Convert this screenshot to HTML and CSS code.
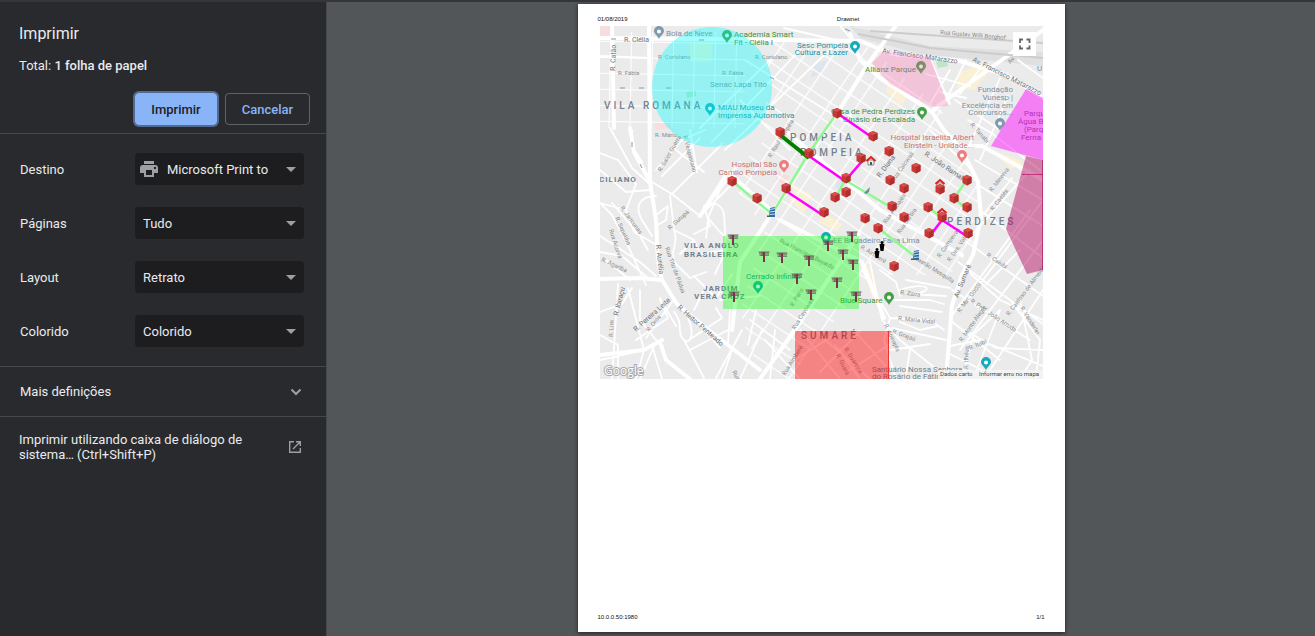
FILE: index.html
```html
<!DOCTYPE html>
<html lang="pt">
<head>
<meta charset="utf-8">
<title>Imprimir</title>
<link rel="stylesheet" href="styles.css">
</head>
<body>
<div class="dialog">
  <form class="sidebar">
    <header class="head">
      <h1 class="title">Imprimir</h1>
      <p class="total">Total: <b>1 folha de papel</b></p>
      <div class="actions">
        <button class="btn primary" type="button">Imprimir</button>
        <button class="btn" type="button">Cancelar</button>
      </div>
    </header>
    <section class="settings">
      <div class="row">
        <label for="dest">Destino</label>
        <div class="pick with-icon">
          <svg class="printer" viewBox="0 0 18 16" aria-hidden="true"><path fill="#9aa0a6" d="M4 0h10v3H4zM3 4h12a3 3 0 0 1 3 3v5h-4v4H4v-4H0V7a3 3 0 0 1 3-3z"/><path fill="#1d1d1f" d="M6 9h6v5H6zM14 6h2v2h-2z"/></svg>
          <select id="dest"><option>Microsoft Print to</option></select>
          <svg class="arrow" viewBox="0 0 10 5" aria-hidden="true"><path d="M0 0h10L5 5z"/></svg>
        </div>
      </div>
      <div class="row">
        <label for="pages">Páginas</label>
        <div class="pick"><select id="pages"><option>Tudo</option></select><svg class="arrow" viewBox="0 0 10 5" aria-hidden="true"><path d="M0 0h10L5 5z"/></svg></div>
      </div>
      <div class="row">
        <label for="layout">Layout</label>
        <div class="pick"><select id="layout"><option>Retrato</option></select><svg class="arrow" viewBox="0 0 10 5" aria-hidden="true"><path d="M0 0h10L5 5z"/></svg></div>
      </div>
      <div class="row">
        <label for="color">Colorido</label>
        <div class="pick"><select id="color"><option>Colorido</option></select><svg class="arrow" viewBox="0 0 10 5" aria-hidden="true"><path d="M0 0h10L5 5z"/></svg></div>
      </div>
    </section>
    <button class="more" type="button">Mais definições
      <svg class="glyph" viewBox="0 0 14 14" aria-hidden="true"><path d="M2.500 4.500 7 9l4.500-4.500" fill="none" stroke="#9aa0a6" stroke-width="2"/></svg>
    </button>
    <a class="system" href="#">
      <span>Imprimir utilizando caixa de diálogo de sistema… (Ctrl+Shift+P)</span>
      <svg class="glyph" viewBox="0 0 14 14" aria-hidden="true"><path d="M6 1.700H1.700v10.600h10.600V8M8 1.700h4.300V6M12 2 5 9" fill="none" stroke="#9aa0a6" stroke-width="1.400"/></svg>
    </a>
  </form>

  <main class="preview">
    <article class="sheet">
      <header class="sheet-line"><span>01/08/2019</span><span class="name">Drawnet</span></header>
      <svg class="map" viewBox="600 26 443 353" role="img" aria-label="Mapa">
        <defs>
          <pattern id="blocks" width="24" height="18" patternUnits="userSpaceOnUse" patternTransform="translate(780 133) rotate(34)"><path d="M0 0H24M0 0V18" stroke="#fff" stroke-width="2.600"/></pattern>
          <pattern id="grid" width="21" height="16" patternUnits="userSpaceOnUse" patternTransform="translate(610 41) rotate(1)"><path d="M0 0H21M0 0V16" stroke="#fff" stroke-width="2"/></pattern>
          <g id="cube"><path fill="#c93835" d="M0-5 4.500-3V3L0 5.500-4.500 3V-3z"/><path fill="#d6504c" d="M0-5 4.500-3 0-1-4.500-3z"/><path fill="#b02e2d" d="M0-1 4.500-3V3L0 5.500z"/></g>
          <g id="torii"><path stroke="#606d68" stroke-width="1.200" d="M-5.500-4H5.500M-4.500-.8H5"/><path stroke="#8a4a58" stroke-width="1" d="M-5-2.900H5"/><path stroke="#7a3549" stroke-width="2" d="M0-4V6"/><path stroke="#7a3549" stroke-width=".8" d="M-2-4V0"/></g>
          <g id="house"><path fill="#eee" stroke="#777" stroke-width=".8" d="M-3-1H3V4H-3z"/><path fill="none" stroke="#d22" stroke-width="2" d="M-4.500 0 0-4 4.500 0"/><path fill="#555" d="M-1 1H1V4H-1z"/></g>
          <g id="tower"><path fill="#2f6ba6" d="M-2-4 3-5V5H-3z"/><path stroke="#d5e8f7" stroke-width=".9" d="M-2-2.500 3-3.500M-2 0 3-.8M-2 2.500 3 2"/><path fill="#386b38" d="M-5 3.500H-2V5H-5z"/></g>
          <g id="person"><circle cy="-3.500" r="1.500"/><path d="M-2.500-2H2.500L1.500 5H-1.500z"/></g>
          <g id="pin"><path d="M0 6C-1 3-5 1-5-2A5 5 0 0 1 5-2C5 1 1 3 0 6z"/><circle cy="-1.500" r="2" fill="#fff"/></g>
        </defs>
        <path fill="#ebebeb" d="M600 26H1043V379H600z"/>
        <g fill="#e0e0e0"><path d="M850 26 930 46 1043 52V66L920 54 860 38z"/></g>
        <g fill="#faf0d6"><path d="M960 72 986 62 992 68 974 90 956 88zM888 85 906 98 902 106 886 92zM794 185 812 195 804 214 790 200zM826 214 842 224 838 232 818 222zM993 152 1020 160 1026 168 1010 168zM861 262 870 268 880 300 872 298zM690 42H712V62H690z"/></g>
        <path fill="#bfe5c4" d="M686 92 696 90V96L687 98zM936 62 946 60 948 66 938 68z"/><path fill="#dde5ec" d="M815 64 826 60 822 74 811 77zM838 180 846 176 842 190 834 188z"/>
        <path fill="#f7dddd" d="M600 26H611V36H600zM654 123 674 120 672 128 656 130zM778 172 790 176 784 184 776 180z"/>
        <path fill="url(#grid)" d="M600 32H745V128H600z"/>
        <path fill="url(#blocks)" d="M768 42H862L940 108 962 155 980 190V236L950 275H870L790 379H760L740 310 765 230 728 178 765 140z"/>
        <g fill="none" stroke="#fff" stroke-width="1.800" stroke-linecap="round" stroke-linejoin="round">
          <path d="M700 128 770 60M712 142 800 50M725 150 840 40M740 100 790 150M745 60 850 125M610 128 632 168 652 186M600 153 618 160 636 184 626 210 600 203M600 170 626 192 650 190M632 130 632 146 642 162M656 170 682 140 705 130M652 182 672 194 690 176 722 144M672 194 700 216 740 162M662 176 700 138M676 150 704 172M690 130 697 172M700 216 730 186M738 164 720 190 708 218 720 232 730 240"/>
          <path d="M600 203 612 215 630 250 646 285M612 203 640 236 648 250M626 210 634 232 655 244M656 196C640 196 634 206 642 220L652 236M656 215 668 206 666 220 656 226M670 195 674 230C680 244 668 250 676 264L690 278 706 272M674 230 694 240 680 254M694 234 710 226 704 206C712 200 722 204 724 214L726 250 700 254 694 240M708 220 706 238M600 236 640 262 656 276M600 252 622 256 648 278M606 260 630 280M618 284 612 379M600 335 618 345V379M600 312 622 304 632 288M628 288 644 350 636 379M640 290 640 320 660 345M646 338 672 302M660 298 676 326M636 340 668 318 660 300M654 346 640 379M652 345 662 379M674 312C684 322 676 334 684 340S694 330 688 318M684 340 704 378M692 338 722 318 716 308M690 350 728 330M694 276 716 298 732 274M704 290 694 310M728 246 715 274M720 300 760 296M730 310 728 345M756 310 748 345M750 320 790 350M742 330 716 378M762 330 740 379M765 340 800 379M775 330 770 379M720 348 704 330M732 350 722 379M600 360 644 350"/>
          <path d="M600 56 650 58M840 26 852 40M784 28 836 40M950 70 930 104M966 60 944 104M984 64 960 94M930 58 950 104M926 74 970 86M940 92 966 98M1000 78 968 148M1018 60 1043 78M1008 96 980 160M968 120 990 132 1040 170M955 100 1000 130M930 130 970 168M975 160 1043 200M980 186 1043 226M980 210 1043 258M1030 170 980 226M1043 200 968 300M1012 178 984 214M1043 240 960 350M1030 210 950 318M964 240 1043 296M958 262 1043 324M952 290 1030 340M950 320 1000 360M964 268 1000 300 1043 320M1043 290 990 370M1000 310 976 372M1020 250 986 284M965 330 996 348 1043 350M950 346 980 340 1043 366M1010 300 1040 340 1036 379M962 378 974 334 1000 310M1020 300 1032 360 1020 379M950 354 1000 379"/>
          <path d="M870 262 882 320 900 340M862 270 890 318 930 320 944 330M890 318 884 340 896 379M900 290C930 280 936 292 912 294L946 296M900 306 942 312M888 300 930 300 944 304M892 328 946 340M900 340 940 372M890 350 930 344M900 322 920 330 938 326M910 350 905 379M800 330 840 379M814 330 870 379M795 360 840 331M820 372 860 331M850 370 889 345M855 331 889 370M835 345 860 379M880 270 896 282 900 296M906 280 950 288"/>
        </g>
        <g fill="none" stroke="#fff" stroke-width="4" stroke-linecap="round" stroke-linejoin="round">
          <path d="M600 38 700 39 860 41 892 54 960 61 1006 75 1043 98M612 26 614 128M649 26 650 182 656 220 658 262 662 280 677 304 706 328 760 370M600 279 640 278 661 280M630 128 634 152 650 182M897 24 868 64 838 112 773 212 740 262 732 330M1043 30 1010 54 938 106 932 112 880 78 860 60 850 34M932 112 944 130 962 150 978 182 981 217 973 255 962 275 952 305 946 379M773 212 750 192 728 172 700 216M600 355 644 350 662 340M1043 180 982 146 955 146M661 345 666 360 690 379M962 255 880 210 788 133M780 220 862 262 884 318M860 232 795 330 760 379"/>
        </g>
        <path fill="none" stroke="#ccc" stroke-width="2" d="M858 34 900 42 930 48 1043 58M870 31 1043 43"/>

        <g class="street">
          <text x="624" y="42">R. Clélia</text><text class="xs" x="618" y="75">R. Fábia</text><text class="xs" x="658" y="59">R. Coriolano</text><text class="xs" x="755" y="59">R. Coriolano</text><text class="xs" x="722" y="75">R. Fábia</text>
          <text transform="translate(615 71) rotate(-88)">R. Catão</text><text class="xs" x="655" y="137">R. Mário</text>
          <text class="xs" transform="translate(661 172) rotate(-60)">R. Sales Guerra</text><text class="xs" transform="translate(683 136) rotate(75)">R. Vespasiano</text>
          <text class="xs" transform="translate(620 208) rotate(54)">R. Jaricunas</text><text class="xs" transform="translate(615 218) rotate(66)">R. Sepetiba</text><text class="xs" transform="translate(609 230) rotate(72)">Rua Acorvá</text><text class="xs" transform="translate(670 230) rotate(-42)">R. Gurupá</text><text transform="translate(656 245) rotate(84)">R. Aurélia</text><text class="xs" transform="translate(665 248) rotate(70)">Rua Tito de Pádua</text>
          <text class="xs" transform="translate(601 261) rotate(25)">R. Agariba</text><text transform="translate(618 316) rotate(-76)">R. Ibiraçu</text><text class="xs" transform="translate(613 337) rotate(-88)">R. Lim</text><text transform="translate(636 332) rotate(-42)">R. Pereira Leite</text><text class="xs" transform="translate(649 332) rotate(-50)">R. Orós</text><text transform="translate(677 308) rotate(41)">R. Heitor Penteado</text>
          <text class="xs" transform="translate(795 330) rotate(-58)">Rua Cayowaá</text><text class="xs" transform="translate(785 376) rotate(-58)">Rua Aimberê</text><text class="xs" transform="translate(793 307) rotate(-58)">R. Paris</text><text class="xs" transform="translate(844 349) rotate(58)">R. Duartina</text><text class="xs" transform="translate(836 355) rotate(64)">R. Guará</text>
          <text class="xs" transform="translate(732 372) rotate(60)">Rua</text><text class="xs" transform="translate(779 242) rotate(27)">Rua Francisco Bayardo</text><text class="xs" transform="translate(771 158) rotate(-58)">R. Raul Pompéia</text>
          <text transform="translate(882 53) rotate(8)">Av. Francisco Matarazzo</text><text transform="translate(972 61) rotate(27)">Av. Francisco Matarazzo</text><text class="xs" transform="translate(940 34) rotate(5)">Rua Gustav Willi Borghof</text><text class="xs" transform="translate(1010 64) rotate(-45)">Av.</text>
          <text transform="translate(924 155) rotate(34)">R. João Ramalho</text><text transform="translate(880 178) rotate(-53)">R. Diana</text><text class="xs" transform="translate(894 182) rotate(-55)">Rua Caiowaá</text><text class="xs" transform="translate(886 224) rotate(-55)">Rua Apinajés</text><text class="xs" transform="translate(900 234) rotate(-55)">Rua Bartira</text><text class="xs" transform="translate(860 248) rotate(32)">R. Aimberê</text>
          <text class="xs" transform="translate(970 125) rotate(48)">R. Tanabi</text><text class="xs" transform="translate(992 192) rotate(-52)">R. Minerva</text><text class="xs" transform="translate(993 211) rotate(-52)">R. Caetés</text><text class="xs" transform="translate(940 258) rotate(-55)">R. Campevas</text><text class="xs" transform="translate(950 262) rotate(-55)">R. Des. Vale</text>
          <text class="xs" transform="translate(914 259) rotate(32)">Gastão Mesquita</text><text transform="translate(958 298) rotate(-68)">Av. Sumaré</text><text class="xs" transform="translate(960 313) rotate(-53)">R. Min. Godói</text><text class="xs" transform="translate(962 342) rotate(-55)">R. Monte Alegre</text><text class="xs" transform="translate(970 302) rotate(34)">R. Prof. João Arruda</text><text class="xs" transform="translate(1009 316) rotate(-53)">R. Cardoso de Almeida</text><text class="xs" transform="translate(1020 308) rotate(58)">R. Vanderlei</text><text class="xs" transform="translate(970 350) rotate(-23)">R. Itabi</text><text class="xs" transform="translate(986 256) rotate(34)">R. Caiubi</text>
          <text class="xs" transform="translate(900 294) rotate(8)">R. Zaira</text><text class="xs" transform="translate(898 320) rotate(6)">R. Maria Vidal</text><text class="xs" transform="translate(892 333) rotate(20)">R. Grajaú</text><text class="xs" transform="translate(884 325) rotate(65)">R. Apinajés</text><text class="xs" transform="translate(968 369) rotate(-88)">R. Ilhéus</text>
        </g>
        <path stroke="#8795b5" stroke-width="1" fill="none" d="M611 39h5M699 40h5M620 88h5M639 88h5M666 88h5M632 142v5M640 164l2 4M845 29l5 2M770 77l4 2"/>

        <g class="area">
          <text class="lg" x="604" y="109">VILA ROMANA</text><text x="599" y="182">CILIANO</text><text class="lg" x="790" y="141">POMPEIA</text><text class="lg" x="800" y="156">POMPEIA</text><text class="lg" x="947" y="225">PERDIZES</text>
          <text x="684" y="248">VILA ANGLO</text><text x="684" y="257">BRASILEIRA</text><text x="703" y="291">JARDIM</text><text x="694" y="299">VERA CRUZ</text><text class="lg" x="801" y="339">SUMARÉ</text>
        </g>

        <g fill="#7f9bad"><use href="#pin" x="659" y="33"/><use href="#pin" x="1000" y="125"/></g>
        <g fill="#43a047"><use href="#pin" x="727" y="37"/><use href="#pin" x="921" y="68"/><use href="#pin" x="922" y="114"/><use href="#pin" x="889" y="299"/></g>
        <g fill="#19a9bd"><use href="#pin" x="855" y="48"/><use href="#pin" x="710" y="110"/><use href="#pin" x="758" y="288"/><use href="#pin" x="826" y="239"/><use href="#pin" x="986" y="364"/></g>
        <g fill="#ef7d7d"><use href="#pin" x="784" y="167"/><use href="#pin" x="962" y="157"/></g>
        <g class="place">
          <g fill="#7b909f"><text x="666" y="36">Bola de Neve</text><text x="710" y="87">Senac Lapa Tito</text><g text-anchor="end"><text x="1013" y="92">Fundação</text><text x="1013" y="100">Vunesp |</text><text x="1013" y="108">Excelência em</text><text x="1013" y="115">Concursos...</text></g><text x="833" y="243">EE Brigadeiro Faria Lima</text><text x="1037" y="71">U</text></g>
          <g fill="#3d923f"><text x="734" y="37">Academia Smart</text><text x="734" y="45">Fit - Clélia I</text><text x="865" y="72">Allianz Parque</text><g text-anchor="end"><text x="915" y="114">Casa de Pedra Perdizes</text><text x="915" y="122">Ginásio de Escalada</text></g><text x="840" y="303">Blue Square</text></g>
          <g fill="#1993a3"><g text-anchor="end"><text x="848" y="48">Sesc Pompéia</text><text x="848" y="55">Cultura e Lazer</text></g><text x="718" y="110">MIAU Museu da</text><text x="718" y="118">Imprensa Automotiva</text><text x="746" y="279">Cerrado Infinito</text></g>
          <g fill="#c77571"><g text-anchor="end"><text x="777" y="167">Hospital São</text><text x="777" y="175">Camilo Pompéia</text><text x="974" y="140">Hospital Israelita Albert</text><text x="974" y="148">Einstein - Unidade...</text></g></g>
          <g fill="#71808a"><text x="872" y="372">Santuário Nossa Senhora</text><text x="872" y="379">do Rosário de Fátim</text></g>
          <g fill="#7c5780"><text x="1024" y="116">Parqu</text><text x="1018" y="124">Água B</text><text x="1024" y="132">(Parq</text><text x="1021" y="140">Ferna</text></g>
        </g>

        <circle cx="712" cy="87" r="60" fill="#0ff" fill-opacity=".36"/>
        <path fill="#ff69b4" fill-opacity=".3" d="M872 63 884 51 930 57 948 106 932 107 890 84z"/>
        <path fill="#f0f" fill-opacity=".46" d="M1026 89 1043 98V160L991 146z"/>
        <path fill="#b0005a" fill-opacity=".46" d="M1026 156 1043 160V270L1027 274 1006 229z"/>
        <path stroke="#b0005a" stroke-opacity=".6" fill="none" d="M1022 174.500H1043M1042.500 160V270"/>
        <path fill="#0f0" fill-opacity=".36" d="M723 236H859V309H723z"/>
        <path fill="red" fill-opacity=".44" d="M795 331H889V379H795z"/><path stroke="#e33" d="M888.500 331V379"/>
        <g fill="none" stroke-width="2.500">
          <path stroke="#90f890" d="M732 181 772 214 809 153 837 113M845 180 892 208M845 180 835 199M878 228 917 258M861 158 873 163M928 207 942 218M967 180 954 198 967 210"/>
          <path stroke="#f0f" d="M837 113 873 138M809 156 845 181 863 160M786 191 824 216M929 237 942 220 968 237"/>
          <path stroke="#008000" stroke-width="4" d="M779 134 809 158"/>
        </g>
        <use href="#house" x="871" y="161"/><use href="#house" x="940" y="184"/><use href="#house" x="942" y="213"/>
        <use href="#cube" x="837" y="113"/><use href="#cube" x="873" y="136"/><use href="#cube" x="780" y="132"/><use href="#cube" x="809" y="153"/><use href="#cube" x="889" y="151"/><use href="#cube" x="861" y="158"/><use href="#cube" x="732" y="181"/><use href="#cube" x="757" y="198"/><use href="#cube" x="786" y="188"/><use href="#cube" x="846" y="178"/><use href="#cube" x="846" y="192"/><use href="#cube" x="835" y="197"/><use href="#cube" x="824" y="212"/><use href="#cube" x="890" y="180"/><use href="#cube" x="892" y="206"/><use href="#cube" x="865" y="218"/><use href="#cube" x="878" y="228"/><use href="#cube" x="916" y="168"/><use href="#cube" x="904" y="188"/><use href="#cube" x="928" y="207"/><use href="#cube" x="904" y="217"/><use href="#cube" x="954" y="198"/><use href="#cube" x="967" y="180"/><use href="#cube" x="967" y="207"/><use href="#cube" x="940" y="189"/><use href="#cube" x="942" y="217"/><use href="#cube" x="929" y="233"/><use href="#cube" x="968" y="233"/><use href="#cube" x="894" y="266"/>
        <use href="#torii" x="733" y="239"/><use href="#torii" x="764" y="256"/><use href="#torii" x="782" y="257"/><use href="#torii" x="809" y="260"/><use href="#torii" x="828" y="245"/><use href="#torii" x="852" y="236"/><use href="#torii" x="843" y="254"/><use href="#torii" x="853" y="264"/><use href="#torii" x="797" y="278"/><use href="#torii" x="837" y="282"/><use href="#torii" x="811" y="294"/><use href="#torii" x="734" y="296"/><use href="#torii" x="856" y="296"/>
        <use href="#tower" x="772" y="212"/><use href="#tower" x="916" y="255"/><use href="#person" x="882" y="246"/><use href="#person" x="877" y="253"/>
        <path fill="#708d96" d="M864 193 870 187 869 192 866 194z"/>

        <path fill="#fff" d="M1013 32H1036V56H1013z"/><path fill="none" stroke="#666" stroke-width="1.800" d="M1020 43V39.500H1023M1026.500 39.500H1029.500V43M1029.500 45.500V48.500H1026.500M1023 48.500H1020V45.500"/>
        <path fill="#f5f5f5" fill-opacity=".85" d="M938 370H1043V379H938z"/>
        <text class="credit" x="940" y="376">Dados carto</text><text class="credit" x="979" y="376">Informar erro no mapa</text>
        <text class="google" x="604" y="375">Google</text>
      </svg>
      <footer class="sheet-line bottom"><span>10.0.0.50:1980</span><span>1/1</span></footer>
    </article>
  </main>
</div>
</body>
</html>
```
FILE: styles.css
```css
* { box-sizing: border-box; }
body { margin: 0; background: #525659; color: #e8eaed; font: 13px/15px Roboto, sans-serif; }
.dialog { display: flex; min-height: 100vh; border-top: 2px solid #35363a; }
.sidebar { flex: 0 0 327px; background: #292a2d; border-right: 1px solid #46484b; }
.head { padding: 22px 16px 8px 19px; border-bottom: 1px solid #46474a; }
.title { margin: 0; font-size: 16px; line-height: 20px; font-weight: 400; }
.total { margin: 14px 0 20px; }
.total b { font-weight: 500; }
.actions { display: flex; justify-content: flex-end; gap: 8px; }
.btn { width: 85px; height: 32px; padding: 0; border: 1px solid #5f6368; border-radius: 4px; background: none; color: #8ab4f8; font: 500 13px/15px Roboto, sans-serif; }
.primary { width: 82px; background: #8ab4f8; border-color: #8ab4f8; color: #202124; box-shadow: 0 0 0 2px #536b90; }
.settings { display: grid; gap: 22px; padding: 19px 22px 19px 20px; border-bottom: 1px solid #46474a; }
.row { display: grid; grid-template-columns: 115px 1fr; align-items: center; }
.pick { display: grid; grid-template-columns: 1fr 18px; align-items: center; border-radius: 4px; background: #1d1d1f; }
.pick select { grid-area: 1 / 1 / 2 / 3; width: 100%; height: 32px; padding: 0 24px 0 8px; border: 0; border-radius: 4px; background: none; color: #e8eaed; font: 13px/15px Roboto, sans-serif; appearance: none; }
.pick.with-icon select { padding-left: 32px; }
.arrow { grid-area: 1 / 2; width: 10px; height: 5px; fill: #9aa0a6; pointer-events: none; }
.printer { grid-area: 1 / 1; width: 18px; height: 16px; margin-left: 5px; }
.more { display: flex; justify-content: space-between; align-items: center; width: 100%; height: 50px; padding: 0 23px 0 20px; border: 0; border-bottom: 1px solid #46474a; background: none; color: inherit; font: inherit; text-align: left; }
.system { display: flex; justify-content: space-between; align-items: center; gap: 32px; padding: 15px 24px 16px 19px; color: inherit; text-decoration: none; }
.glyph { flex: none; width: 14px; height: 14px; }
.preview { flex: 1; display: flex; justify-content: center; padding: 2px 0 4px; }
.sheet { display: flex; flex-direction: column; height: calc(100vh - 8px); aspect-ratio: 487 / 628; padding: 11px 20px; background: #fff; box-shadow: 0 1px 4px #222; color: #111; font: 6px/8px "Liberation Sans", sans-serif; }
.sheet-line { display: flex; justify-content: space-between; }
.sheet-line .name { flex: 1; padding-left: 24px; text-align: center; }
.sheet-line.bottom { margin-top: auto; }
.map { display: block; width: auto; margin: 3px 2px 0; }
.map text { font-family: Roboto, sans-serif; }
.street text { font-size: 7px; fill: #6d7277; }
.street .xs { font-size: 6px; fill: #878b8f; }
.area text { font-size: 8px; font-weight: 700; letter-spacing: 1px; fill: #728090; }
.area .lg { font-size: 10px; font-weight: 500; letter-spacing: 3px; }
.place text { font-size: 8px; }
.map .credit { font-size: 6px; fill: #444; }
.map .google { font: 500 12px "Open Sans", sans-serif; fill: #fff; stroke: #aaa; stroke-width: 2px; paint-order: stroke; }
```
